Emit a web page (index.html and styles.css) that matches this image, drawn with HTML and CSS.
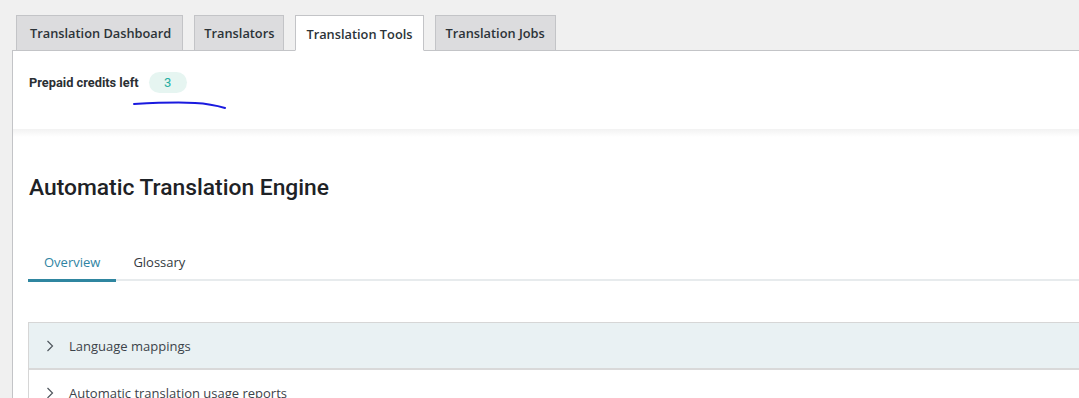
FILE: index.html
```html
<!DOCTYPE html>
<html>
<head>
<meta charset="utf-8">
<link rel="stylesheet" href="styles.css">
</head>
<body>
<div class="page">
  <nav class="tabs">
    <a class="tab">Translation Dashboard</a>
    <a class="tab">Translators</a>
    <a class="tab active">Translation Tools</a>
    <a class="tab">Translation Jobs</a>
  </nav>
  <div class="panel">
    <div class="credits">
      <span class="credits-label">Prepaid credits left</span>
      <span class="badge">3</span>
      <svg class="scribble" width="100" height="12" viewBox="0 0 100 12">
        <path d="M1 4 C 20 3, 45 2, 62 3 C 72 3.5, 82 5, 92 8" fill="none" stroke="#1a1adf" stroke-width="2" stroke-linecap="round"/>
      </svg>
    </div>
    <div class="shade"></div>
    <div class="content">
      <h1 class="title">Automatic Translation Engine</h1>
      <div class="subtabs">
        <span class="subtab active">Overview</span>
        <span class="subtab">Glossary</span>
      </div>
      <div class="accordion">
        <div class="acc-row open">
          <svg class="chev" width="8" height="12" viewBox="0 0 8 12"><polyline points="1.5,1 6.5,6 1.5,11" fill="none" stroke="#50575e" stroke-width="1.2"/></svg>
          <span>Language mappings</span>
        </div>
        <div class="acc-row">
          <svg class="chev" width="8" height="12" viewBox="0 0 8 12"><polyline points="1.5,1 6.5,6 1.5,11" fill="none" stroke="#50575e" stroke-width="1.2"/></svg>
          <span>Automatic translation usage reports</span>
        </div>
      </div>
    </div>
  </div>
</div>
</body>
</html>
```
FILE: styles.css
```css
html, body {
  margin: 0;
  padding: 0;
}
body {
  background: #f0f0f0;
  overflow: hidden;
  width: 1079px;
  height: 398px;
  font-family: "Open Sans", "Noto Sans", sans-serif;
  color: #2c3338;
}
.page {
  padding: 15px 0 0 12px;
  width: 1100px;
}
.tabs {
  display: flex;
  gap: 11px;
  padding-left: 4px;
  position: relative;
  z-index: 2;
}
.tab {
  display: block;
  padding: 5px 10px;
  line-height: 24px;
  font-size: 12.8px;
  font-weight: 600;
  color: #2c3338;
  background: #dcdcde;
  border: 1px solid #c3c4c7;
  margin-bottom: -1px;
  white-space: nowrap;
}
.tab:nth-child(1) {
  padding-left: 13px;
  padding-right: 11px;
}
.tab:nth-child(2) {
  padding-left: 9px;
  padding-right: 9px;
}
.tab.active {
  background: #fff;
  border-bottom-color: #fff;
  padding-top: 6px;
  padding-bottom: 4px;
}
.panel {
  background: #fff;
  border: 1px solid #c3c4c7;
  border-right: none;
  border-bottom: none;
  position: relative;
  z-index: 1;
  height: 360px;
}
.credits {
  position: relative;
  height: 78px;
  box-sizing: border-box;
  padding: 21px 0 0 16px;
  display: flex;
  align-items: flex-start;
}
.credits-label {
  font-family: Roboto, "Liberation Sans", sans-serif;
  font-weight: 700;
  font-size: 12.8px;
  color: #2b2f33;
  line-height: 21px;
}
.badge {
  margin-left: 10px;
  width: 38px;
  height: 21px;
  border-radius: 11px;
  background: #e6f5f1;
  color: #27aea3;
  font-family: Roboto, "Liberation Sans", sans-serif;
  font-size: 13px;
  line-height: 21px;
  text-align: center;
}
.scribble {
  position: absolute;
  left: 120px;
  top: 49px;
}
.shade {
  height: 8px;
  background: linear-gradient(#f2f2f2, #ffffff);
}
.content {
  padding: 0 0 0 15px;
}
.title {
  margin: 0;
  padding: 37px 0 0 1px;
  font-family: Roboto, "Liberation Sans", sans-serif;
  font-weight: 500;
  font-size: 22.8px;
  line-height: 28px;
  color: #1e2226;
}
.subtabs {
  margin-top: 50px;
  display: flex;
  border-bottom: 2px solid #e7ebed;
}
.subtab {
  padding: 0 16px 7px 16px;
  font-size: 13px;
  line-height: 20px;
  color: #333a40;
  margin-bottom: -2px;
  border-bottom: 2px solid transparent;
}
.subtab.active {
  color: #2f84a3;
  border-bottom: 3px solid #2f86a0;
  margin-bottom: -3px;
  padding-bottom: 6px;
}
.subtab + .subtab {
  padding-left: 17px;
}
.accordion {
  margin-top: 41px;
  border-top: 1px solid #d6d6d6;
  border-left: 1px solid #d6d6d6;
}
.acc-row {
  display: flex;
  align-items: center;
  height: 45px;
  padding-left: 17px;
  font-size: 13px;
  color: #3c434a;
  border-bottom: 2px solid #d9d9d9;
}
.acc-row span {
  margin-left: 1px;
}
.acc-row.open {
  background: #e9f1f3;
}
.chev {
  margin-right: 14px;
}
```
